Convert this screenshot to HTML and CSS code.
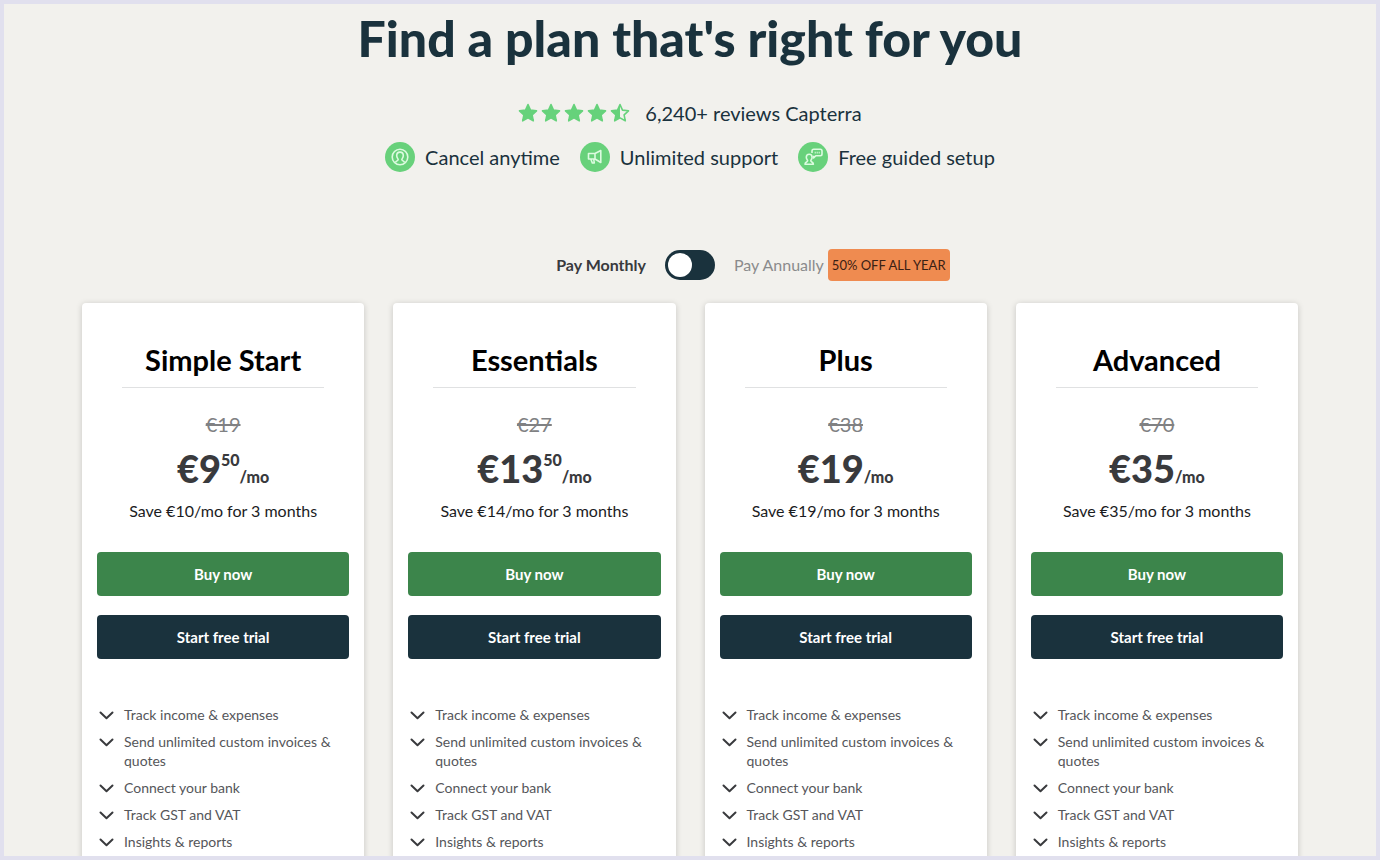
FILE: index.html
```html
<!DOCTYPE html>
<html lang="en">
<head>
<meta charset="utf-8">
<meta name="viewport" content="width=device-width, initial-scale=1">
<title>Find a plan that's right for you</title>
<link rel="stylesheet" href="styles.css">
</head>
<body>
<svg class="sprite" aria-hidden="true">
  <symbol id="star" viewBox="0 0 20 20"><path d="M10 1.6l2.5 5.5 6 .7-4.4 4.1 1.2 5.9L10 14.9l-5.3 2.9 1.2-5.9L1.5 7.8l6-.7z" fill="currentColor" stroke="currentColor" stroke-width="1.6" stroke-linejoin="round"/></symbol>
  <symbol id="star-half" viewBox="0 0 20 20"><path d="M10 1.6l2.5 5.5 6 .7-4.4 4.1 1.2 5.9L10 14.9l-5.3 2.9 1.2-5.9L1.5 7.8l6-.7z" fill="none" stroke="currentColor" stroke-width="1.6" stroke-linejoin="round"/><path d="M10 1.6v13.3l-5.3 2.9 1.2-5.9L1.5 7.8l6-.7z" fill="currentColor"/></symbol>
  <symbol id="chevron" viewBox="0 0 15 9"><path d="M1.5 1.5l6 5.7 6-5.7" fill="none" stroke="currentColor" stroke-width="2" stroke-linecap="round" stroke-linejoin="round"/></symbol>
</svg>
<main class="page">
  <header class="intro">
    <h1 class="headline">Find a plan that's right for you</h1>
    <div class="reviews">
      <div class="stars" role="img" aria-label="4.5 out of 5 stars">
        <svg class="star"><use href="#star"/></svg>
        <svg class="star"><use href="#star"/></svg>
        <svg class="star"><use href="#star"/></svg>
        <svg class="star"><use href="#star"/></svg>
        <svg class="star"><use href="#star-half"/></svg>
      </div>
      <span>6,240+ reviews Capterra</span>
    </div>
    <ul class="perks">
      <li class="perk">
        <svg class="perk-icon" viewBox="0 0 30 30" aria-hidden="true"><circle class="disc" cx="15" cy="15" r="15"/><circle cx="15" cy="15" r="7.8"/><path d="M10.5 20.5c.3-1.7 2.7-1.5 2.7-2.9 0-.9-1.500-1.5-1.5-4 0-2.2 1.4-3.5 3.3-3.5s3.3 1.3 3.3 3.5c0 2.5-1.5 3.100-1.5 4 0 1.400 2.400 1.200 2.700 2.900"/></svg>
        Cancel anytime
      </li>
      <li class="perk">
        <svg class="perk-icon" viewBox="0 0 30 30" aria-hidden="true"><circle class="disc" cx="15" cy="15" r="15"/><path d="M8.500 11.500h6.500v5.500H8.500zM15 11.500l5.800-3v12L15 17M10.800 17l1.500 4h2l-.6-4"/></svg>
        Unlimited support
      </li>
      <li class="perk">
        <svg class="perk-icon" viewBox="0 0 30 30" aria-hidden="true"><circle class="disc" cx="15" cy="15" r="15"/><path d="M7 22.200c0-2.500 2.600-2 2.600-3.500 0-.8-1.300-1.400-1.300-3.500 0-1.900 1.200-3 2.900-3s2.900 1.100 2.900 3c0 2.100-1.300 2.700-1.300 3.500 0 1.500 2.600 1 2.600 3.500z"/><path d="M14 11V9q0-1.700 1.700-1.700h6.600Q24 7.300 24 9v3q0 1.700-1.700 1.700h-4.500L15.600 16v-2.300"/><path d="M16.700 10.600h1m1 0h1m1 0h1"/></svg>
        Free guided setup
      </li>
    </ul>
  </header>

  <div class="billing">
    <label class="billing-monthly" for="billing">Pay Monthly</label>
    <input class="toggle" type="checkbox" role="switch" id="billing" aria-label="Pay annually">
    <span class="billing-annual">Pay Annually <span class="badge">50% OFF ALL YEAR</span></span>
  </div>

  <section class="plans" aria-label="Plans">
    <article class="plan">
      <h2 class="plan-name">Simple Start</h2>
      <s class="old-price">€19</s>
      <p class="price"><span class="amount">€9</span><span class="cents">50</span><span class="per">/mo</span></p>
      <p class="saving">Save €10/mo for 3 months</p>
      <button class="btn btn-buy" type="button">Buy now</button>
      <button class="btn btn-trial" type="button">Start free trial</button>
      <ul class="features">
        <li class="feature"><svg class="chevron"><use href="#chevron"/></svg>Track income &amp; expenses</li>
        <li class="feature"><svg class="chevron"><use href="#chevron"/></svg>Send unlimited custom invoices &amp; quotes</li>
        <li class="feature"><svg class="chevron"><use href="#chevron"/></svg>Connect your bank</li>
        <li class="feature"><svg class="chevron"><use href="#chevron"/></svg>Track GST and VAT</li>
        <li class="feature"><svg class="chevron"><use href="#chevron"/></svg>Insights &amp; reports</li>
      </ul>
    </article>
    <article class="plan">
      <h2 class="plan-name">Essentials</h2>
      <s class="old-price">€27</s>
      <p class="price"><span class="amount">€13</span><span class="cents">50</span><span class="per">/mo</span></p>
      <p class="saving">Save €14/mo for 3 months</p>
      <button class="btn btn-buy" type="button">Buy now</button>
      <button class="btn btn-trial" type="button">Start free trial</button>
      <ul class="features">
        <li class="feature"><svg class="chevron"><use href="#chevron"/></svg>Track income &amp; expenses</li>
        <li class="feature"><svg class="chevron"><use href="#chevron"/></svg>Send unlimited custom invoices &amp; quotes</li>
        <li class="feature"><svg class="chevron"><use href="#chevron"/></svg>Connect your bank</li>
        <li class="feature"><svg class="chevron"><use href="#chevron"/></svg>Track GST and VAT</li>
        <li class="feature"><svg class="chevron"><use href="#chevron"/></svg>Insights &amp; reports</li>
      </ul>
    </article>
    <article class="plan">
      <h2 class="plan-name">Plus</h2>
      <s class="old-price">€38</s>
      <p class="price"><span class="amount">€19</span><span class="per">/mo</span></p>
      <p class="saving">Save €19/mo for 3 months</p>
      <button class="btn btn-buy" type="button">Buy now</button>
      <button class="btn btn-trial" type="button">Start free trial</button>
      <ul class="features">
        <li class="feature"><svg class="chevron"><use href="#chevron"/></svg>Track income &amp; expenses</li>
        <li class="feature"><svg class="chevron"><use href="#chevron"/></svg>Send unlimited custom invoices &amp; quotes</li>
        <li class="feature"><svg class="chevron"><use href="#chevron"/></svg>Connect your bank</li>
        <li class="feature"><svg class="chevron"><use href="#chevron"/></svg>Track GST and VAT</li>
        <li class="feature"><svg class="chevron"><use href="#chevron"/></svg>Insights &amp; reports</li>
      </ul>
    </article>
    <article class="plan">
      <h2 class="plan-name">Advanced</h2>
      <s class="old-price">€70</s>
      <p class="price"><span class="amount">€35</span><span class="per">/mo</span></p>
      <p class="saving">Save €35/mo for 3 months</p>
      <button class="btn btn-buy" type="button">Buy now</button>
      <button class="btn btn-trial" type="button">Start free trial</button>
      <ul class="features">
        <li class="feature"><svg class="chevron"><use href="#chevron"/></svg>Track income &amp; expenses</li>
        <li class="feature"><svg class="chevron"><use href="#chevron"/></svg>Send unlimited custom invoices &amp; quotes</li>
        <li class="feature"><svg class="chevron"><use href="#chevron"/></svg>Connect your bank</li>
        <li class="feature"><svg class="chevron"><use href="#chevron"/></svg>Track GST and VAT</li>
        <li class="feature"><svg class="chevron"><use href="#chevron"/></svg>Insights &amp; reports</li>
      </ul>
    </article>
  </section>
</main>
</body>
</html>
```
FILE: styles.css
```css
* {
  box-sizing: border-box;
}

body,
h1,
h2,
p,
ul {
  margin: 0;
  padding: 0;
}

ul {
  list-style: none;
}

body {
  height: 100vh;
  overflow: hidden;
  border: 4px solid #e1e0ee;
  background: #f2f1ed;
  color: #393a3d;
  font-family: Lato, "Open Sans", sans-serif;
}

.sprite {
  display: none;
}

.page {
  display: flex;
  flex-direction: column;
  align-items: center;
  padding: 6px 24px 0;
}

.intro {
  display: flex;
  flex-direction: column;
  align-items: center;
  color: #1a323d;
}

.headline {
  font-size: 50px;
  font-weight: 900;
  line-height: 56px;
}

.reviews {
  display: flex;
  align-items: center;
  gap: 15px;
  margin-top: 33px;
  font-size: 20px;
  line-height: 28px;
}

.stars {
  display: flex;
  gap: 3px;
  color: #66d27b;
}

.star {
  width: 20px;
  height: 20px;
}

.perks {
  display: flex;
  gap: 20px;
  margin-top: 15px;
  font-size: 20px;
  line-height: 30px;
}

.perk {
  display: flex;
  align-items: center;
  gap: 10px;
}

.perk-icon {
  width: 30px;
  height: 30px;
  fill: none;
  stroke: #dcfbe0;
  stroke-width: 1.6;
  stroke-linejoin: round;
}

.disc {
  fill: #68d17b;
  stroke: none;
}

.billing {
  display: grid;
  grid-template-columns: 1fr auto 1fr;
  align-items: center;
  gap: 19px;
  width: 100%;
  margin-top: 77px;
  font-size: 16px;
  line-height: 32px;
}

.billing-monthly {
  justify-self: end;
  font-weight: 700;
}

.toggle {
  appearance: none;
  display: flex;
  align-items: center;
  width: 50px;
  height: 30px;
  margin: 0;
  padding: 3px;
  border-radius: 15px;
  background: #1a323d;
}

.toggle::before {
  content: "";
  width: 24px;
  height: 24px;
  border-radius: 50%;
  background: #fff;
}

.toggle:checked {
  justify-content: flex-end;
}

.billing-annual {
  display: flex;
  align-items: center;
  gap: 4px;
  color: #8a8b8c;
}

.badge {
  padding: 0 4px;
  border-radius: 4px;
  background: #ef8b50;
  color: #3a2014;
  font-size: 13px;
}

.plans {
  display: grid;
  grid-template-columns: repeat(4, 1fr);
  gap: 29px;
  width: 100%;
  max-width: 1216px;
  margin-top: 22px;
}

.plan {
  display: flex;
  flex-direction: column;
  padding: 38px 15px 24px;
  border-radius: 4px;
  background: #fff;
  box-shadow: 0 1px 6px rgba(0, 0, 0, 0.18);
  text-align: center;
}

.plan-name {
  margin: 0 25px;
  padding-bottom: 8px;
  border-bottom: 1px solid #e0e1e2;
  color: #000;
  font-size: 29px;
  font-weight: 700;
  line-height: 38px;
}

.old-price {
  margin-top: 24px;
  color: #808183;
  font-size: 20px;
  font-weight: 400;
  line-height: 24px;
}

.price {
  display: flex;
  justify-content: center;
  align-items: baseline;
  margin-top: 12px;
  font-weight: 900;
  line-height: 40px;
}

.amount {
  font-size: 38px;
}

.cents {
  align-self: flex-start;
  font-size: 16px;
  line-height: 24px;
}

.per {
  font-size: 16px;
}

.saving {
  margin-top: 4px;
  color: #1b1c1e;
  font-size: 16px;
  line-height: 20px;
}

.btn {
  height: 44px;
  margin: 0;
  padding: 0 16px;
  border: 0;
  border-radius: 4px;
  color: #fff;
  font-family: inherit;
  font-size: 15px;
  font-weight: 700;
}

.btn-buy {
  margin-top: 31px;
  background: #3c854b;
}

.btn-trial {
  margin-top: 19px;
  background: #1a323d;
}

.features {
  display: grid;
  gap: 8px;
  margin-top: 46px;
  padding: 0 2px;
  font-size: 14px;
  line-height: 19px;
  text-align: left;
}

.feature {
  display: flex;
  gap: 10px;
  color: #55565a;
}

.chevron {
  flex: none;
  width: 15px;
  height: 9px;
  margin-top: 6px;
  color: #393a3d;
}
```
